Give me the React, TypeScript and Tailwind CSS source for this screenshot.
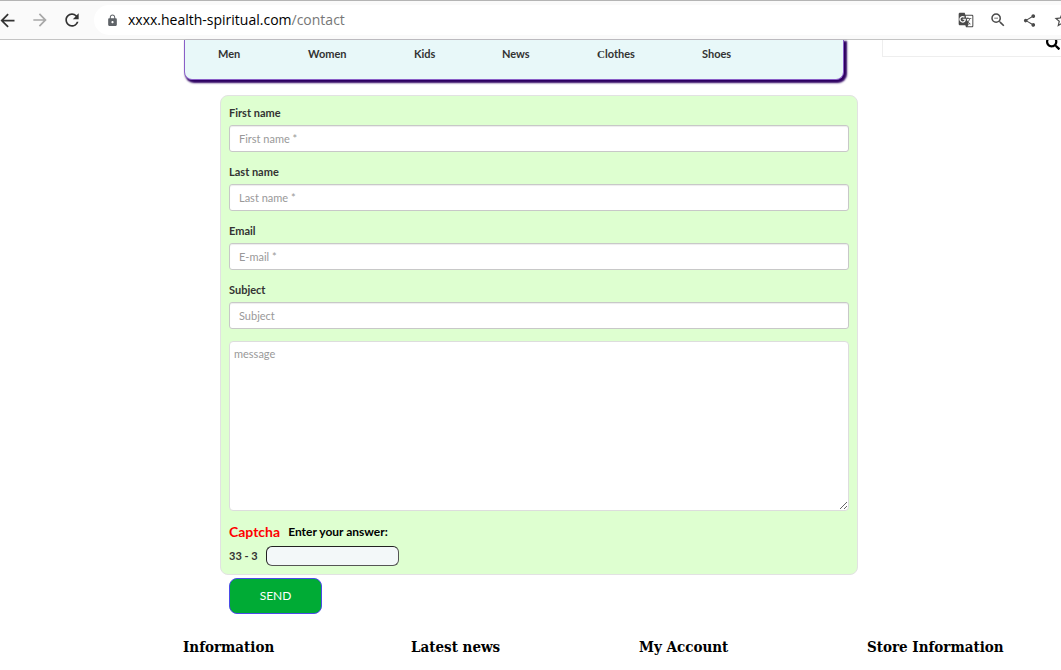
import {
  MdArrowBack,
  MdArrowForward,
  MdGTranslate,
  MdLock,
  MdOutlineZoomOut,
  MdRefresh,
  MdShare,
  MdStarBorder,
} from "react-icons/md";
import { FaSearch } from "react-icons/fa";

const navLinks = [
  { label: "Men", width: "w-[90px]" },
  { label: "Women", width: "w-[106px]" },
  { label: "Kids", width: "w-[88px]" },
  { label: "News", width: "w-[95px]" },
  { label: "Clothes", width: "w-[105px]" },
  { label: "Shoes", width: "w-[90px]" },
];

const fields = [
  { id: "first-name", label: "First name", placeholder: "First name *", type: "text" },
  { id: "last-name", label: "Last name", placeholder: "Last name *", type: "text" },
  { id: "email", label: "Email", placeholder: "E-mail *", type: "email" },
  { id: "subject", label: "Subject", placeholder: "Subject", type: "text" },
];

const footerColumns = ["Information", "Latest news", "My Account", "Store Information"];

function BrowserBar() {
  return (
    <header className="flex h-10 items-center border-t border-b border-t-[#b4b4b4] border-b-[#c4c4c4] bg-[#fafafa] text-[#4a4a4a]">
      <button aria-label="Back" className="w-[18px] shrink-0 overflow-hidden text-[#333]">
        <MdArrowBack size={21} className="-ml-[3px]" />
      </button>
      <button aria-label="Forward" className="ml-3 shrink-0 text-[#a8a8a8]">
        <MdArrowForward size={20} />
      </button>
      <button aria-label="Reload" className="ml-3 shrink-0 text-[#333]">
        <MdRefresh size={20} />
      </button>
      <div className="ml-3 flex h-[30px] min-w-0 flex-1 items-center rounded-l-full bg-white pl-3">
        <MdLock size={13} className="shrink-0 text-[#5f6368]" />
        <p className="ml-[9px] flex-1 truncate font-['Open_Sans',sans-serif] text-sm text-black">
          xxxx.health-spiritual.com<span className="text-[#777]">/contact</span>
        </p>
        <button aria-label="Translate this page" className="shrink-0">
          <MdGTranslate size={16} />
        </button>
        <button aria-label="Zoom" className="ml-[15px] shrink-0">
          <MdOutlineZoomOut size={18} />
        </button>
        <button aria-label="Share" className="ml-[15px] shrink-0">
          <MdShare size={15} />
        </button>
        <button aria-label="Bookmark" className="ml-4 w-2 shrink-0 overflow-hidden">
          <MdStarBorder size={18} />
        </button>
      </div>
    </header>
  );
}

function ContactForm() {
  return (
    <form className="ml-9">
      <div className="rounded-lg border border-[#e2e2e2] bg-[#deffd0] px-2 pt-[9px] pb-2">
        {fields.map((field) => (
          <div key={field.id} className="mb-3">
            <label htmlFor={field.id} className="mb-1 block text-[11px] leading-4 font-bold text-[#333]">
              {field.label}
            </label>
            <input
              id={field.id}
              type={field.type}
              placeholder={field.placeholder}
              className="block h-[27px] w-full rounded-[3px] border border-[#c8c8c8] bg-white px-[9px] text-[11px] shadow-[inset_0_1px_1px_rgba(0,0,0,0.075)] placeholder:text-[#999]"
            />
          </div>
        ))}
        <textarea
          aria-label="message"
          placeholder="message"
          className="block h-[170px] w-full resize rounded-[4px] border border-[#ddd] bg-white px-1 py-1 text-[11px] placeholder:text-[#999]"
        />
        <div className="mt-[11px] flex items-center text-xs leading-5 font-bold">
          <span className="text-sm text-[#f00]">Captcha</span>
          <label htmlFor="answer" className="ml-2 text-black">
            Enter your answer:
          </label>
        </div>
        <div className="mt-1 flex items-center text-[11px] font-bold text-[#333]">
          <span>33 - 3</span>
          <input id="answer" className="ml-2 h-5 w-[133px] rounded-md border border-[#555] border-t-[#222] border-l-[#222] bg-[#f3f8f9] px-1" />
        </div>
      </div>
      <button
        type="button"
        className="mt-[3px] ml-[9px] h-9 w-[93px] rounded-lg border border-[#4b4be8] bg-[#00ab35] text-xs text-white"
      >
        SEND
      </button>
    </form>
  );
}

export default function App() {
  return (
    <div className="min-h-screen overflow-x-hidden bg-white font-['Lato',sans-serif]">
      <BrowserBar />
      <div className="flex pl-[184px]">
        <main className="min-w-0 flex-1">
          <nav className="mr-[14px] flex h-10 rounded-b-lg border border-t-0 border-[#8a5fc7] bg-[#e8f8f9] pt-1 pl-[33px] shadow-[2px_2px_2px_1px_#2d0061]">
            {navLinks.map((link) => (
              <a key={link.label} href="#" className={`${link.width} text-[11px] leading-5 font-bold text-[#333]`}>
                {link.label === "Clothes" ? (
                  <>
                    <span className="font-['Liberation_Serif',serif]">C</span>lothes
                  </>
                ) : (
                  link.label
                )}
              </a>
            ))}
          </nav>
          <div className="mt-[15px]">
            <ContactForm />
          </div>
        </main>
        <aside className="ml-6 w-[179px] shrink-0">
          <div className="flex h-[17px] border-b border-l border-[#eee]">
            <input aria-label="Search" className="min-w-0 flex-1 px-2 text-xs" />
            <button aria-label="Search" className="h-[10px] w-[15px] overflow-hidden">
              <FaSearch size={14} className="-mt-1" />
            </button>
          </div>
        </aside>
      </div>
      <footer className="mt-[21px] flex pl-[183px]">
        {footerColumns.map((title) => (
          <h4
            key={title}
            className="w-[228px] shrink-0 font-['DejaVu_Serif_Condensed','DejaVu_Serif',serif] text-[15px] leading-6 font-bold text-black"
          >
            {title}
          </h4>
        ))}
      </footer>
    </div>
  );
}
